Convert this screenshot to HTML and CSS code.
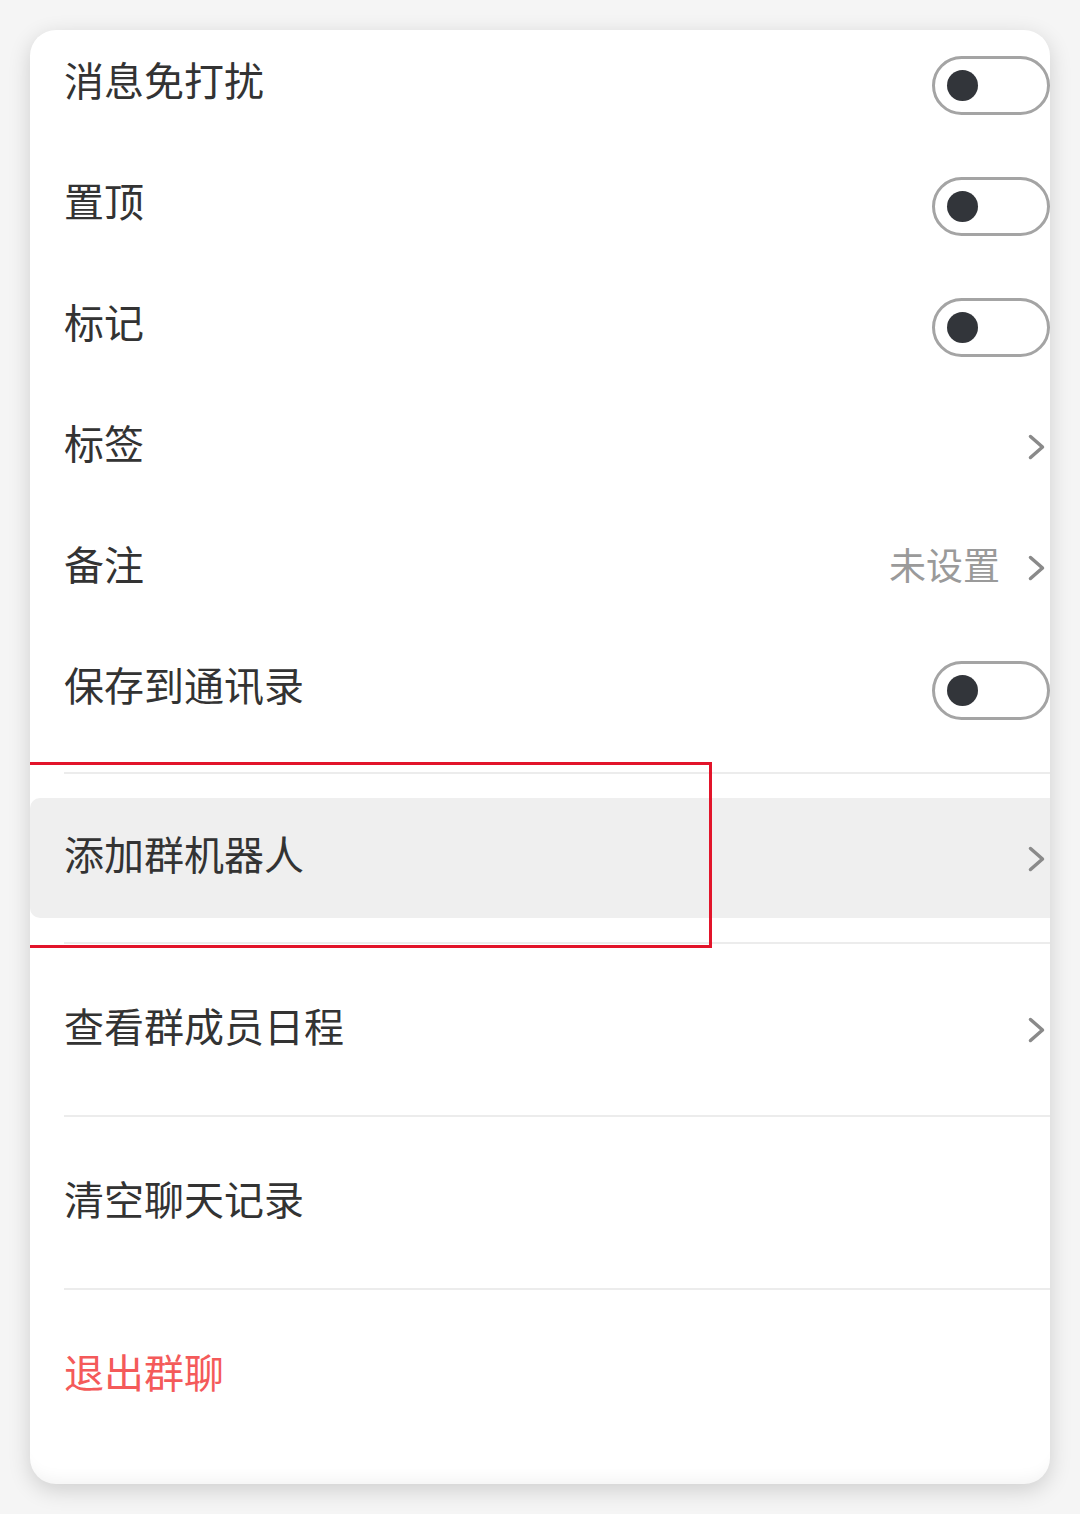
FILE: index.html
```html
<!DOCTYPE html>
<html lang="zh">
<head>
    <meta charset="UTF-8">
    <meta name="viewport" content="width=device-width, initial-scale=1.0">
    <title>聊天设置</title>
    <link rel="stylesheet" href="styles.css">
</head>
<body>
    <div class="card">
        <div class="list">
            <div class="row">
                <span class="label">消息免打扰</span>
                <div class="switch"><span class="knob"></span></div>
            </div>
            <div class="row">
                <span class="label">置顶</span>
                <div class="switch"><span class="knob"></span></div>
            </div>
            <div class="row">
                <span class="label">标记</span>
                <div class="switch"><span class="knob"></span></div>
            </div>
            <div class="row">
                <span class="label">标签</span>
                <svg class="arrow" viewBox="0 0 17 26"><polyline points="2.5,2.5 14.5,13 2.5,23.5"/></svg>
            </div>
            <div class="row">
                <span class="label">备注</span>
                <div class="row-right">
                    <span class="value">未设置</span>
                    <svg class="arrow" viewBox="0 0 17 26"><polyline points="2.5,2.5 14.5,13 2.5,23.5"/></svg>
                </div>
            </div>
            <div class="row">
                <span class="label">保存到通讯录</span>
                <div class="switch"><span class="knob"></span></div>
            </div>
        </div>

        <div class="group">
            <div class="divider"></div>
            <div class="item item-active">
                <div class="item-inner">
                    <span class="label">添加群机器人</span>
                    <svg class="arrow" viewBox="0 0 17 26"><polyline points="2.5,2.5 14.5,13 2.5,23.5"/></svg>
                </div>
            </div>
            <div class="divider"></div>
            <div class="item">
                <span class="label">查看群成员日程</span>
                <svg class="arrow" viewBox="0 0 17 26"><polyline points="2.5,2.5 14.5,13 2.5,23.5"/></svg>
            </div>
            <div class="divider"></div>
            <div class="item">
                <span class="label">清空聊天记录</span>
            </div>
            <div class="divider"></div>
            <div class="item">
                <span class="label danger">退出群聊</span>
            </div>
        </div>

        <!-- 标注框 -->
        <div class="mark"></div>
    </div>
</body>
</html>
```

FILE: styles.css
```css
* {
    margin: 0;
    padding: 0;
    box-sizing: border-box;
}

body {
    background-color: #f5f5f5;
    font-family: "Noto Sans CJK SC", "Noto Sans", sans-serif;
    padding: 30px;
    width: 1080px;
    height: 1514px;
    overflow: hidden;
}

.card {
    position: relative;
    width: 1020px;
    height: 1454px;
    background: white;
    border-radius: 26px;
    overflow: hidden;
    box-shadow: 0 6px 22px rgba(0, 0, 0, 0.16), inset 0 -18px 16px -14px rgba(0, 0, 0, 0.05);
}

.list {
    margin-top: -7px;
}

.row {
    height: 121px;
    display: flex;
    align-items: center;
    justify-content: space-between;
    padding-left: 34px;
}

.label {
    font-size: 40px;
    color: #333;
    line-height: 1;
    margin-top: -10px;
}

.label.danger {
    color: #f45a5a;
}

.row-right {
    display: flex;
    align-items: center;
    gap: 28px;
}

.value {
    font-size: 37px;
    color: #9a9a9a;
    line-height: 1;
    margin-top: -6px;
}

.arrow {
    width: 17px;
    height: 26px;
    margin-right: 5px;
    flex-shrink: 0;
}

.arrow polyline {
    fill: none;
    stroke: #8a8a8a;
    stroke-width: 3.5;
    stroke-linecap: round;
    stroke-linejoin: round;
}

.switch {
    width: 118px;
    height: 59px;
    margin-top: 3px;
    border: 3px solid #a4a4a4;
    border-radius: 30px;
    display: flex;
    align-items: center;
    padding-left: 12px;
}

.knob {
    width: 31px;
    height: 31px;
    border-radius: 50%;
    background: #32353a;
}

.group {
    margin-top: 23px;
}

.divider {
    height: 2px;
    margin-left: 34px;
    background: #ececec;
}

.item {
    height: 171px;
    display: flex;
    align-items: center;
    justify-content: space-between;
    padding-left: 34px;
}

.item-active {
    height: auto;
    padding: 24px 0;
    display: block;
}

.item-inner {
    height: 120px;
    background: #efefef;
    border-radius: 10px 0 0 10px;
    display: flex;
    align-items: center;
    justify-content: space-between;
    padding-left: 34px;
}

.item-inner .arrow {
    margin-top: 2px;
}

.mark {
    position: absolute;
    left: -3px;
    top: 732px;
    width: 685px;
    height: 186px;
    border: 3px solid #e2142a;
}
```
